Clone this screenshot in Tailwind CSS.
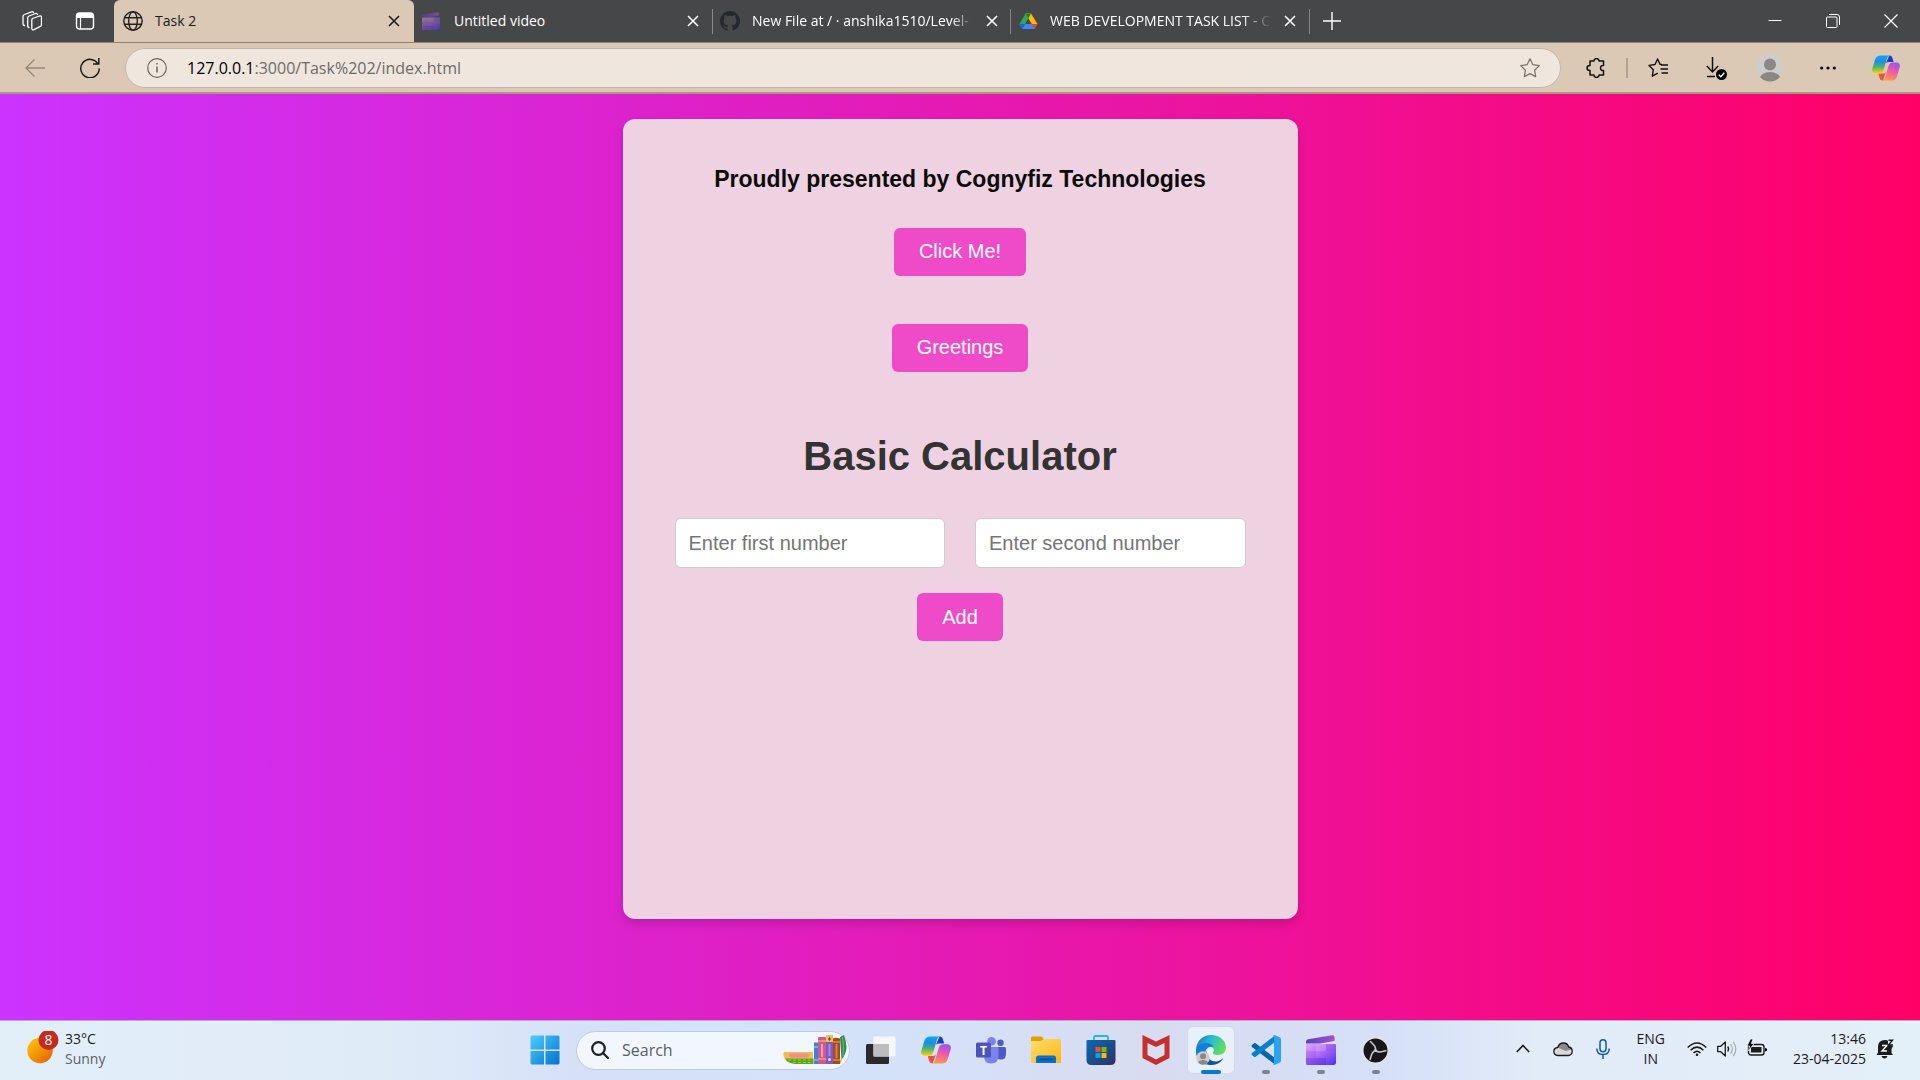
<!DOCTYPE html>
<html lang="en">
<head>
<meta charset="utf-8">
<title>Task 2</title>
<script src="https://cdn.jsdelivr.net/npm/@tailwindcss/browser@4"></script>
</head>
<body class="flex min-h-screen flex-col font-['Open_Sans','Noto_Sans',sans-serif]">

<!-- Shared icon shapes -->
<svg class="absolute size-0" aria-hidden="true">
  <defs>
    <linearGradient id="cpA" x1="0" y1="0" x2="0" y2="1"><stop offset="0" stop-color="#0fa5f3"/><stop offset=".35" stop-color="#1b8fe0"/><stop offset=".65" stop-color="#52b56a"/><stop offset="1" stop-color="#ffd400"/></linearGradient>
    <linearGradient id="cpB" x1="0.6" y1="0" x2="0.3" y2="1"><stop offset="0" stop-color="#9b54f0"/><stop offset=".45" stop-color="#ee5aa5"/><stop offset="1" stop-color="#ff9a4d"/></linearGradient>
    <linearGradient id="clip" x1="0" y1="0" x2="1" y2="1"><stop offset="0" stop-color="#e9a6f8"/><stop offset=".5" stop-color="#a866f2"/><stop offset="1" stop-color="#4a2ff0"/></linearGradient>
    <linearGradient id="clipTop" x1="0" y1="0" x2="1" y2="0"><stop offset="0" stop-color="#5a40c4"/><stop offset="1" stop-color="#a552d0"/></linearGradient>
    <clipPath id="pc"><circle cx="14" cy="14" r="13.500"/></clipPath>
    <symbol id="copilot" viewBox="0 0 30 28">
      <path d="M18.500 0.500c2 0 3 1.300 3.500 3l1.200 4h-5.200c-2 0-3 .8-3.600 2.500z" fill="#1b3fc4"/>
      <path d="M11.500 27.500c-2 0-3-1.300-3.500-3l-1.200-4.500h5c2 0 3-.8 3.600-2.500z" fill="#f0503c"/>
      <path d="M9.500 0.500h9.500c-2 .6-2.700 2-3.300 4l-3.200 11c-.8 2.800-2.200 4.300-5 4.300H3.600c-3 0-4-2.300-3.200-5.300l2.900-9.500c.9-3 2.800-4.500 6.200-4.500z" fill="url(#cpA)"/>
      <path d="M20.500 27.500H11c2-.6 2.700-2 3.300-4l3.200-11c.8-2.800 2.200-4.300 5-4.300h3.900c3 0 4 2.300 3.200 5.300l-2.900 9.500c-.9 3-2.800 4.500-6.200 4.500z" fill="url(#cpB)"/>
    </symbol>
    <symbol id="clipchamp" viewBox="0 0 30 30">
      <path d="M0 8.500v-1.500c0-1.600.9-2.400 2.300-2.700L26 0.300c1.400-.2 2.200.3 2.400 1.600l.3 2.300c.1 1.200-.4 1.900-1.600 2.100L14 8.500z" fill="url(#clipTop)"/>
      <path d="M1.500 9h27c1 0 1.500.5 1.500 1.500v17c0 1.600-.9 2.500-2.500 2.500h-25C.9 30 0 29.100 0 27.500v-17C0 9.500.5 9 1.500 9z" fill="url(#clip)"/>
      <path d="M10 9h10v7H10z" fill="#fff" opacity=".15"/><path d="M20 9h10v7H20zM0 16h10v7H0z" fill="#7a35e8" opacity=".2"/><path d="M0 23h20v7H0z" fill="#5b2be0" opacity=".4"/>
    </symbol>
    <symbol id="close" viewBox="0 0 12 12"><path d="M1 1l10 10M11 1L1 11" fill="none" stroke="currentColor" stroke-width="1.600"/></symbol>
    <symbol id="person" viewBox="0 0 28 28">
      <circle cx="14" cy="14" r="13.500" fill="#cfcdcb"/><g clip-path="url(#pc)" fill="#8b8785"><circle cx="14" cy="10.500" r="6"/><ellipse cx="14" cy="25" rx="10.500" ry="7"/></g>
    </symbol>
  </defs>
</svg>

<header>
  <div class="flex h-[42px] items-stretch bg-[#464749] text-sm text-white">
    <div class="flex w-[114px] items-center gap-[33px] pl-[22px]">
      <button aria-label="Workspaces"><svg class="block size-5" viewBox="0 0 20 20" fill="none" stroke="#fff" stroke-width="1.300" stroke-linejoin="round" stroke-linecap="round"><path d="M10.500 7.500l7-2.500q2.500-.5 2 2v6.500q0 1.500-1.500 2.200l-6 3q-2 .8-2.200-1.200V9q0-1 .7-1.500z"/><path d="M15.500 3.500q-.5-1.500-2-1L7 5q-1.300.6-1.300 2v8q0 1.200 1.200 1.500"/><path d="M11.500 1.500Q11 .4 9.500.8L2.500 3.500Q1 4 1 5.500v7.500q0 1.200 1.500 1.500"/></svg></button>
      <button aria-label="Tab actions"><svg class="block size-5" viewBox="0 0 20 20"><rect x="1.500" y="2" width="17" height="16" rx="3" fill="none" stroke="#fff" stroke-width="1.400"/><path d="M1.500 7V4.500q0-2.500 2.500-2.500h12q2.500 0 2.500 2.500V7z" fill="#fff"/><path d="M5.500 6v12" stroke="#fff" stroke-width="1.200"/></svg></button>
    </div>
    <div class="flex w-[300px] items-center rounded-t-md bg-[#dcc9b5] pr-3.5 pl-[9px] text-[#1b1b1b]">
      <svg class="size-5" viewBox="0 0 20 20" fill="none" stroke="#222" stroke-width="1.400"><circle cx="10" cy="10" r="9.200"/><ellipse cx="10" cy="10" rx="4.300" ry="9.200"/><path d="M1.500 6.700h17M1.500 13.300h17"/></svg>
      <span class="ml-3 flex-1">Task 2</span>
      <button aria-label="Close tab"><svg class="block size-3"><use href="#close"/></svg></button>
    </div>
    <div class="flex w-[298px] items-center pr-[13px] pl-2">
      <svg class="size-[18px] opacity-50"><use href="#clipchamp"/></svg>
      <span class="ml-3.5 flex-1">Untitled video</span>
      <button aria-label="Close tab"><svg class="block size-3"><use href="#close"/></svg></button>
    </div>
    <div class="h-[25px] w-px self-center bg-[#88898b]"></div>
    <div class="flex w-[297px] items-center pr-3 pl-[7px]">
      <svg class="size-5" viewBox="0 0 16 16" fill="#24292f"><path d="M8 0C3.580 0 0 3.580 0 8c0 3.540 2.290 6.530 5.470 7.590.4.070.55-.17.55-.38 0-.19-.01-.82-.01-1.490-2.010.37-2.530-.49-2.690-.94-.09-.23-.48-.94-.82-1.130-.28-.15-.68-.52-.01-.53.63-.01 1.080.58 1.230.82.72 1.210 1.870.87 2.330.66.07-.52.28-.87.51-1.070-1.780-.2-3.640-.89-3.640-3.950 0-.87.31-1.590.82-2.150-.08-.2-.36-1.020.08-2.120 0 0 .67-.21 2.200.82.64-.18 1.320-.27 2-.27s1.360.09 2 .27c1.530-1.040 2.200-.82 2.200-.82.44 1.100.16 1.920.08 2.120.51.56.82 1.270.82 2.150 0 3.070-1.870 3.750-3.650 3.950.29.25.54.73.54 1.480 0 1.070-.01 1.930-.01 2.200 0 .21.15.46.55.38A8.010 8.010 0 0 0 16 8c0-4.420-3.580-8-8-8z"/></svg>
      <span class="mr-3 ml-3 flex-1 overflow-hidden mask-r-from-90% whitespace-nowrap">New File at / · anshika1510/Level-</span>
      <button aria-label="Close tab"><svg class="block size-3"><use href="#close"/></svg></button>
    </div>
    <div class="h-[25px] w-px self-center bg-[#88898b]"></div>
    <div class="flex w-[298px] items-center pr-[13px] pl-2">
      <svg class="size-[19px]" viewBox="0 0 19 19"><path d="M6.500 1.500h5.500L3.500 17 .5 12z" fill="#2da94f"/><path d="M6.500 1.500H12l6.500 10.500h-5.800z" fill="#ffba00"/><path d="M12 1.500l-2.800 5-2.700-5z" fill="#188038"/><path d="M.5 12h18l-3 5h-12z" fill="#4285f4"/><path d="M12.700 12h5.800l-3 5z" fill="#ea4335"/><path d="M.5 12h5.800l-2.800 5z" fill="#1967d2"/><path d="M9.300 6.700L12.500 12H6.300z" fill="#464749"/></svg>
      <span class="mr-2 ml-3 flex-1 overflow-hidden mask-r-from-85% mask-r-to-98% whitespace-nowrap">WEB DEVELOPMENT TASK LIST - C</span>
      <button aria-label="Close tab"><svg class="block size-3"><use href="#close"/></svg></button>
    </div>
    <div class="h-[25px] w-px self-center bg-[#88898b]"></div>
    <button aria-label="New tab" class="px-[13px]"><svg class="block size-[18px]" viewBox="0 0 18 18"><path d="M9 0v18M0 9h18" stroke="#fff" stroke-width="1.400"/></svg></button>
    <div class="ml-auto flex">
      <button aria-label="Minimize" class="grid w-[58px] place-items-center"><svg class="size-3.5" viewBox="0 0 14 14"><path d="M.5 6.500h13" stroke="#fff"/></svg></button>
      <button aria-label="Restore" class="grid w-[58px] place-items-center"><svg class="size-3.5" viewBox="0 0 14 14" fill="none" stroke="#fff"><rect x=".5" y="3" width="10.500" height="10.500" rx="1"/><path d="M3 .5h8q2.500 0 2.500 2.500v8"/></svg></button>
      <button aria-label="Close window" class="grid w-[58px] place-items-center"><svg class="size-3.5" viewBox="0 0 14 14"><path d="M.5.5l13 13M13.500.5l-13 13" stroke="#fff" stroke-width="1.200"/></svg></button>
    </div>
  </div>

  <div class="flex h-[52px] items-center border-t border-b-2 border-t-[#8f8376] border-b-[#a8987f] bg-[#dcc9b5] pr-5 pl-[25px]">
    <button aria-label="Back"><svg class="block size-5" viewBox="0 0 20 20" fill="none" stroke="#93887a" stroke-width="1.300"><path d="M20 10H1M9.500 1.500L1 10l8.500 8.500"/></svg></button>
    <button aria-label="Refresh" class="ml-[35px]"><svg class="block size-5" viewBox="0 0 20 20" fill="none" stroke="#1a1a1a" stroke-width="1.500"><path d="M18 6A9.200 9.200 0 1 0 19.200 10.500M18.800 0v6H13"/></svg></button>
    <div class="ml-[25px] flex h-10 flex-1 items-center rounded-full border border-[#c4b9ae] bg-[#efe7de] pr-5 pl-[21px]">
      <svg class="size-5" viewBox="0 0 20 20" fill="none" stroke="#6a6560" stroke-width="1.200"><circle cx="10" cy="10" r="9.300"/><path d="M10 8.500v6M10 5v1.600" stroke-width="1.500"/></svg>
      <div class="ml-5 flex-1 text-base text-[#6d6a67]"><span class="text-black">127.0.0.1</span>:3000/Task%202/index.html</div>
      <button aria-label="Add to favorites"><svg class="block size-5" viewBox="0 0 20 20" fill="none" stroke="#77726d" stroke-width="1.200" stroke-linejoin="round"><path d="M10 .8l2.900 5.900 6.400.9-4.700 4.600 1.100 6.400L10 15.600l-5.700 3 1.100-6.400L.7 7.600l6.400-.9z"/></svg></button>
    </div>
    <button aria-label="Extensions" class="ml-[25px]"><svg class="block size-5" viewBox="0 0 20 20" fill="none" stroke="#111" stroke-width="1.500" stroke-linejoin="round"><path d="M4 3h4c0-3.200 5-3.200 5 0h4.500v4.500c-4-.8-4 5.800 0 5V17H13c0 3.200-5 3.200-5 0H4v-4.500c-4 0-4-5 0-5z"/></svg></button>
    <div class="mx-5 h-5 w-0.5 bg-[#b0a395]"></div>
    <button aria-label="Favorites"><svg class="block size-5" viewBox="0 0 20 20" fill="none" stroke="#111" stroke-width="1.400" stroke-linejoin="round"><path d="M14 6.500l-2-.3L9.600 1 7 6.500l-6 .9 4.300 4.300-1 6.500 5.500-3"/><path d="M13 7h7M12.500 11H20M13.500 15H20"/></svg></button>
    <button aria-label="Downloads" class="ml-[38px]"><svg class="block h-6 w-[21px]" viewBox="0 0 21 24"><path d="M6.500 1v15M.8 10l5.700 6 5.700-6M1 20.500h8" fill="none" stroke="#111" stroke-width="1.500"/><circle cx="15.500" cy="18.500" r="5.500"/><path d="M12.800 18.700l2 2 3.500-4" fill="none" stroke="#fff" stroke-width="1.300"/></svg></button>
    <button aria-label="Profile" class="ml-[29px]"><svg class="block size-7"><use href="#person"/></svg></button>
    <button aria-label="Settings and more" class="ml-9"><svg class="block h-5 w-4" viewBox="0 0 16 20"><circle cx="1.700" cy="10" r="1.600"/><circle cx="8" cy="10" r="1.600"/><circle cx="14.300" cy="10" r="1.600"/></svg></button>
    <button aria-label="Copilot" class="ml-9"><svg class="block size-7"><use href="#copilot"/></svg></button>
  </div>
</header>

<main class="flex flex-1 justify-center bg-linear-[90deg,#cc33ff,#ff0066] pt-[25px] pb-[101px] font-['Liberation_Sans',Arial,sans-serif]">
  <div class="flex min-h-[800px] w-[675px] flex-col items-center rounded-xl bg-[#efd2e1] px-[52px] pt-[46px] shadow-[0_5px_10px_rgba(0,0,0,0.15)]">
    <h3 class="text-[23px] leading-7 font-bold text-[#0c0c0c]">Proudly presented by Cognyfiz Technologies</h3>
    <button class="mt-[35px] h-12 rounded-md bg-[#ef4bc8] px-[25px] pb-0.5 text-xl text-white">Click Me!</button>
    <button class="mt-12 h-12 rounded-md bg-[#ef4bc8] px-[25px] pb-0.5 text-xl text-white">Greetings</button>
    <h1 class="mt-[60px] text-[40px] leading-12 font-bold text-[#333]">Basic Calculator</h1>
    <form class="mt-[38px] flex w-full flex-col items-center">
      <div class="grid w-full grid-cols-2 gap-[30px]">
        <input type="number" aria-label="First number" placeholder="Enter first number" class="h-[50px] min-w-0 rounded-md border border-[#ccc] bg-white px-[13px] text-xl placeholder:text-[#757575]">
        <input type="number" aria-label="Second number" placeholder="Enter second number" class="h-[50px] min-w-0 rounded-md border border-[#ccc] bg-white px-[13px] text-xl placeholder:text-[#757575]">
      </div>
      <button type="button" class="mt-[25px] h-12 rounded-md bg-[#ef4bc8] px-[25px] text-xl text-white">Add</button>
    </form>
  </div>
</main>

<footer class="grid h-[60px] grid-cols-[1fr_auto_1fr] items-center bg-linear-[90deg,#e2eef8_0%,#e0ebf8_20%,#d6e1f8_30%,#d4e2f9_46%,#d9dcf0_60%,#d5e0f7_72%,#e2ebf8_80%,#e3eff9_100%] text-sm text-[#1b1b1b] shadow-[inset_0_1px_0_#a9b4c0]">
  <button class="flex items-center pb-0.5 pl-[27px] text-left" aria-label="Weather">
    <svg class="h-9 w-8" viewBox="0 0 32 36"><defs><linearGradient id="sun" x1="0" y1="0" x2="1" y2="1"><stop offset="0" stop-color="#ffcf0a"/><stop offset="1" stop-color="#e25a05"/></linearGradient></defs><circle cx="13" cy="19.500" r="12.700" fill="url(#sun)"/><circle cx="21.500" cy="10" r="10" fill="#c42b1c" transform="translate(0 -1)"/><text x="21.500" y="14" text-anchor="middle" font-size="14" fill="#fff">8</text></svg>
    <span class="ml-1.5 flex flex-col leading-5"><span>33°C</span><span class="text-[#5c6268]">Sunny</span></span>
  </button>

  <nav class="flex h-[60px] items-center" aria-label="Taskbar">
    <button class="grid w-[55px] place-items-center" aria-label="Start"><svg class="size-[30px]" viewBox="0 0 30 30"><defs><linearGradient id="win" gradientUnits="userSpaceOnUse" x1="0" y1="0" x2="30" y2="30"><stop offset="0" stop-color="#4fd0ff"/><stop offset="1" stop-color="#0070cf"/></linearGradient></defs><path d="M2 .5h12v14H.500V2Q.5.5 2 .5zM15.500.5H28q1.500 0 1.500 1.500v12.500h-14zM.5 16H14v13.500H2q-1.500 0-1.500-1.500zM15.500 16h14v12q0 1.500-1.500 1.500H15.500z" fill="url(#win)"/></svg></button>
    <label class="mr-[3px] ml-1 flex h-[39px] w-[274px] items-center rounded-full border border-[#c0cbe2] bg-[#f2f6fd] pr-0.5 pl-3.5">
      <svg class="size-[18px] shrink-0" viewBox="0 0 18 18" fill="none" stroke="#1f1f1f" stroke-width="2.200" stroke-linecap="round"><circle cx="7.500" cy="7.500" r="6.300"/><path d="M12 12l5 5"/></svg>
      <input type="search" aria-label="Search" placeholder="Search" class="ml-[13px] w-0 flex-1 bg-transparent text-base outline-none placeholder:text-[#5a5f66]">
      <svg class="h-[30px] w-16 shrink-0" viewBox="0 0 64 30">
        <path d="M1 17h29v7H2Q-.5 20 1 17z" fill="#f1bd4c"/><rect x="6" y="18.500" width="20" height="4" rx="2" fill="#ee8f8f"/><path d="M2 23.500h28.500V29H12Q4 28 2 23.500z" fill="#5ea51b"/><path d="M5 25h25M10 27.500h20" stroke="#91cf3b" stroke-dasharray="3 2"/>
        <path d="M31 7.500h4V29h-4z" fill="#3e80dc"/><path d="M31 12h4M31 25h4" stroke="#b9d5fa"/>
        <path d="M35 3q0-1 1-1h6q1 0 1 1v26h-8z" fill="#cf5b8c"/><path d="M35 6h8M35 24h8" stroke="#f5cd63"/><path d="M38 9h2v13h-2z" fill="#f39bbd"/>
        <path d="M43 1q0-1 1-1h5q1 0 1 1v28h-7z" fill="#7c5bc9"/><path d="M43 0h7v7h-7z" fill="#efc044"/><path d="M46.500 2l1.500 2-1.500 2L45 4z" fill="#5b3aa3"/><circle cx="46.500" cy="24.500" r="1.500" fill="#e9dcfb"/><path d="M45.500 9h2v12h-2z" fill="#a68bea"/>
        <path d="M50 3.500q3-1.500 7 0V29h-7z" fill="#a34a21"/><path d="M50 7h7M50 25h7" stroke="#f2b244"/><path d="M52.500 9h2v14h-2z" fill="#d98252"/>
        <path d="M57 2l4-2q2 6 2.500 12-.5 8-5 12.500z" fill="#2f8c50"/><path d="M59.500 2q1.500 9 .5 19" stroke="#6dc184" fill="none"/><path d="M57 25l3-2-3 6z" fill="#f2b244"/>
      </svg>
    </label>
    <button class="grid w-[55px] place-items-center" aria-label="Task view"><svg class="h-7 w-[30px]" viewBox="0 0 30 28"><rect y="8" width="23" height="20" rx="1.500" fill="#2b2b2b"/><rect x="7.500" y=".5" width="22" height="20" rx="1.500" fill="#f7f7f7"/><path d="M7.500 8H23v12.500H7.500z" fill="#bdbdbd"/></svg></button>
    <button class="grid w-[55px] place-items-center" aria-label="Copilot"><svg class="h-7 w-[30px]"><use href="#copilot"/></svg></button>
    <button class="grid w-[55px] place-items-center" aria-label="Teams"><svg class="h-[27px] w-[30px]" viewBox="0 0 30 27"><circle cx="24.500" cy="5.700" r="3.200" fill="#5059c9"/><path d="M19 10h9.500q1.500 0 1.500 1.500V17q0 5.500-5 5.500t-6-4z" fill="#5059c9"/><circle cx="15.500" cy="4.300" r="4.300" fill="#7b83eb"/><path d="M8 10h13.500q1 0 1 1v8q0 7.500-7.300 7.500T8 19z" fill="#7b83eb"/><rect y="5.500" width="15" height="15" rx="1.500" fill="#4b53bc"/><text x="7.500" y="17.500" text-anchor="middle" font-size="12" font-weight="700" fill="#fff">T</text></svg></button>
    <button class="grid w-[55px] place-items-center" aria-label="File Explorer"><svg class="h-7 w-[30px]" viewBox="0 0 30 28"><defs><linearGradient id="fold" x1="0" y1="0" x2="1" y2="1"><stop offset="0" stop-color="#ffdf70"/><stop offset="1" stop-color="#ffb512"/></linearGradient></defs><path d="M0 2Q0 .5 1.500.5h8q1 0 1.800.8L13.500 4v7H0z" fill="#dfa006"/><path d="M0 6q0-1 1-1h9l3-2h15.500Q30 3 30 4.500V27H0z" fill="url(#fold)"/><path d="M5 27v-5q0-2.500 2.500-2.500h15Q25 19.500 25 22v5z" fill="#0b70c6"/><path d="M9 23.500h12" stroke="#074b8e" stroke-width="1.600" stroke-linecap="round"/></svg></button>
    <button class="grid w-[55px] place-items-center" aria-label="Microsoft Store"><svg class="size-[30px]" viewBox="0 0 30 30"><defs><linearGradient id="store" x1="0" y1="0" x2="1" y2="1"><stop offset="0" stop-color="#0b68b8"/><stop offset="1" stop-color="#2c3160"/></linearGradient></defs><path d="M8 6V2.500Q8 1 9.500 1h11Q22 1 22 2.500V6" fill="none" stroke="#23b5ea" stroke-width="1.800"/><path d="M.5 6Q.5 5 1.500 5h27q1 0 1 1v19q0 5-5 5h-19q-5 0-5-5z" fill="url(#store)"/><path d="M9.500 12h5v5h-5z" fill="#f25022"/><path d="M15.500 12h5v5h-5z" fill="#7fba00"/><path d="M9.500 18h5v5h-5z" fill="#00a4ef"/><path d="M15.500 18h5v5h-5z" fill="#ffb900"/></svg></button>
    <button class="grid w-[55px] place-items-center" aria-label="McAfee"><svg class="h-[30px] w-7" viewBox="0 0 28 30"><path d="M.5 0L14 6.500 27.500 0v23L14 30 .500 23z" fill="#c3302e"/><path d="M5.500 8L14 12l8.500-4v12L14 24.500 5.500 20z" fill="#d9def3"/></svg></button>
    <button class="relative grid h-[60px] w-[55px] place-items-center" aria-label="Microsoft Edge">
      <span class="grid size-12 place-items-center rounded-md border border-[#d3d8ea] bg-[#eaf0fb]"><svg class="size-[30px]" viewBox="0 0 30 30"><defs><linearGradient id="edG" x1="0" y1=".2" x2="1" y2=".6"><stop offset="0" stop-color="#1479c9"/><stop offset=".45" stop-color="#2bbbd5"/><stop offset="1" stop-color="#67e34e"/></linearGradient></defs><path d="M0 14C1 5.500 7 0 15 0c8.500 0 15 5.500 15 12.500 0 4.500-3.200 7.500-8 7.500-3.500 0-5.500-1-5-2.500 2.500-3-.5-6.500-5-6.500C6 10.500 2 12 0 14z" fill="url(#edG)"/><path d="M0 14c2-4 6.500-6 10.500-6 3.500 0 6 1.500 7 4-5-1.500-9 2.500-8 8 1 5 4.500 8 8.500 9.500C8 32-1.500 24 0 14z" fill="#1080d8"/><path d="M11 15.500c-2 6 4 12 10 11 3-.6 5.500-2.500 6.500-4-1.500 4.500-6.500 7.500-12 7.500-6 0-9-8-4.500-14.500z" fill="#124f9e"/><svg x="0" y="16" width="14" height="14"><use href="#person"/></svg></svg></span>
      <span class="absolute bottom-[6px] h-1 w-5 rounded-full bg-[#0078d4]"></span>
    </button>
    <button class="relative grid h-[60px] w-[55px] place-items-center" aria-label="Visual Studio Code"><svg class="size-[30px]" viewBox="0 0 30 30"><path d="M1 10l2-1.800q.8-.6 1.600 0L24 23v6.500L1 12q-1-1 0-2z" fill="#0065a9"/><path d="M1 20l2 1.800q.8.600 1.600 0L24 7V.5L1 18q-1 1 0 2z" fill="#0a7fcc"/><path d="M22 .5q.8-.8 2-.3l5 2.400q1 .5 1 1.700v21.400q0 1.200-1 1.700l-5 2.400q-1.200.5-2-.3 1 .4 1-1V1.500q0-1.400-1-1z" fill="#29a3ee"/></svg><span class="absolute bottom-[6px] h-1 w-2 rounded-full bg-[#7d818c]"></span></button>
    <button class="relative grid h-[60px] w-[55px] place-items-center" aria-label="Clipchamp"><svg class="size-[30px]"><use href="#clipchamp"/></svg><span class="absolute bottom-[6px] h-1 w-2 rounded-full bg-[#7d818c]"></span></button>
    <button class="relative grid h-[60px] w-[55px] place-items-center" aria-label="OBS Studio"><svg class="size-[27px]" viewBox="0 0 27 27"><circle cx="13.500" cy="13.500" r="12.700" fill="#17171a" stroke="#e6e4e4" stroke-width="1.400"/><g fill="none" stroke="#c9c7c9" stroke-width="1.600" stroke-linecap="round"><path d="M13.500 13.500C14 9.500 12 8 8.500 4.500"/><path d="M13.500 13.500C14 9.500 12 8 8.500 4.500" transform="rotate(120 13.500 13.500)"/><path d="M13.500 13.500C14 9.500 12 8 8.500 4.500" transform="rotate(240 13.500 13.500)"/></g><circle cx="13.500" cy="13.500" r="1.500" fill="#c9c7c9"/></svg><span class="absolute bottom-[6px] h-1 w-2 rounded-full bg-[#7d818c]"></span></button>
  </nav>

  <div class="flex items-center justify-end pr-[26px] pb-0.5">
    <button aria-label="Show hidden icons"><svg class="block h-5 w-3.5" viewBox="0 0 14 20"><path d="M.8 13L7 6.500l6.200 6.500" fill="none" stroke="#1b1b1b" stroke-width="1.600"/></svg></button>
    <button aria-label="OneDrive" class="ml-[23px]"><svg class="block size-5" viewBox="0 0 20 20"><path d="M5 16.500q-4.200-.3-4.200-4.200Q1 8.800 4.800 8.500 6 4 10.500 4q4 0 5.200 4 3.500.6 3.500 4.300 0 3.700-3.700 4.200z" fill="#d8d8d8"/><path d="M4.800 8.500Q6 4 10.500 4q4 0 5.200 4l3 2.500-6 1.500z" fill="#8a8a8a"/><path d="M5 16.500q-4.200-.3-4.200-4.200Q1 8.800 4.800 8.500 6 4 10.500 4q4 0 5.200 4 3.500.6 3.500 4.300 0 3.700-3.700 4.200z" fill="none" stroke="#1b1b1b" stroke-width="1.300"/></svg></button>
    <button aria-label="Microphone" class="ml-[23px]"><svg class="block h-5 w-3.5" viewBox="0 0 14 20" fill="none" stroke="#1358a8" stroke-width="1.500"><rect x="4" y=".8" width="6" height="12" rx="3"/><path d="M.8 9.500q0 6 6.200 6t6.200-6M7 15.500V20"/></svg></button>
    <button class="ml-[27px] leading-5">ENG<br>IN</button>
    <button aria-label="Network, volume and battery" class="ml-[22px] flex items-center gap-2.5">
      <svg class="size-5" viewBox="0 0 20 20" fill="none" stroke="#1b1b1b" stroke-width="1.500"><path d="M.7 8.500q9.300-9 18.600 0M3.600 11.300q6.400-6.300 12.800 0M6.500 14q3.500-3.500 7 0"/><circle cx="10" cy="15.700" r="1.300" fill="#1b1b1b" stroke="none"/></svg>
      <svg class="size-5" viewBox="0 0 20 20" fill="none" stroke="#1b1b1b" stroke-width="1.300"><path d="M.7 7.300h3L8.300 3v14l-4.600-4.300h-3z" stroke-linejoin="round"/><path d="M10.700 7.500q1.800 2.500 0 5"/><path d="M13.500 5q3.500 5 0 10M16.300 2.800q5 7.200 0 14.400" stroke="#a9b1b9"/></svg>
      <svg class="size-5" viewBox="0 0 20 20"><rect x="1.500" y="5.500" width="15.500" height="10.500" rx="2.500" fill="none" stroke="#1b1b1b" stroke-width="1.400"/><path d="M4 8h10.500v5.500H4z" fill="#1b1b1b"/><path d="M18 9l2 .7v2l-2 .8z"/><path d="M3.500 0L0 7h2.500L1.500 12 7 4.500H4.300L6 0z" stroke="#e3eff9" stroke-width=".8"/></svg>
    </button>
    <button class="ml-[21px] min-w-[78px] text-right leading-5">13:46<br>23-04-2025</button>
    <button aria-label="Notifications" class="ml-2.5"><svg class="block h-5 w-[18px]" viewBox="0 0 18 20"><path d="M2 8q0-7 7-7 2 0 3 .7V5l5 2-1.500 3v4l1.500 2H.5L2 13.500zM5.500 17h6q-.8 2.500-3 2.500t-3-2.500z" fill="#1b1b1b"/><path d="M6 6.500h5L6 12h5" fill="none" stroke="#fff" stroke-width="1.400"/><path d="M12.500 1.300h4L12.500 6h4.500" fill="none" stroke="#1b1b1b" stroke-width="1.400"/></svg></button>
  </div>
</footer>
</body>
</html>
